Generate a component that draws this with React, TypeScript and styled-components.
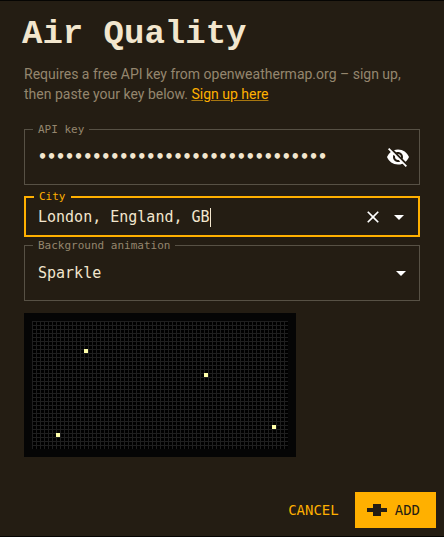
import React, { useEffect, useRef, useState } from "react";
import styled, { createGlobalStyle, css } from "styled-components";
import { MdArrowDropDown, MdClose, MdVisibility, MdVisibilityOff } from "react-icons/md";

const color = {
  backdrop: "#060503",
  surface: "#241d13",
  cream: "#f2e6ce",
  muted: "#94866e",
  outline: "#575145",
  accent: "#ffb000",
  ink: "#241d13",
};
const mono = '"DejaVu Sans Mono", "Liberation Mono", monospace';

const GlobalStyle = createGlobalStyle`
  * { box-sizing: border-box; }
  body { margin: 0; background: ${color.backdrop}; }
  button, input, select { font: inherit; color: inherit; }
`;

const Dialog = styled.form`
  margin: 1px 0;
  background: ${color.surface};
  color: ${color.cream};
  font-family: ${mono};
`;

const Title = styled.h2`
  margin: 0;
  padding: 17px 22px 14px;
  font: bold 34px/32px "Liberation Mono", monospace;
`;

const Content = styled.div`
  padding: 0 24px;
`;

const Intro = styled.p`
  margin: 0 0 20px;
  color: ${color.muted};
  font: 14px/20px Roboto, sans-serif;
`;

const SignUp = styled.a`
  color: ${color.accent};
  text-decoration-color: #a87710;
`;

const Field = styled.fieldset<{ $active?: boolean }>`
  min-width: 0;
  margin: 0;
  padding: 0;
  border: 1px solid ${color.outline};
  ${(p) => p.$active && css`
    margin: 6px 0 3px;
    border: 2px solid ${color.accent};
  `}
`;

const Legend = styled.legend<{ $active?: boolean }>`
  margin-left: 8px;
  padding: 0 5px;
  font-size: 11px;
  line-height: ${(p) => (p.$active ? 12 : 11)}px;
  color: ${(p) => (p.$active ? color.accent : color.muted)};
`;

const FieldRow = styled.div<{ $compact?: boolean }>`
  display: flex;
  align-items: center;
  height: ${(p) => (p.$compact ? 32 : 49)}px;
  padding: ${(p) => (p.$compact ? "0 7px 4px 12px" : "0 9px 5px 13px")};
  font-size: 15px;
`;

const TextInput = styled.input`
  flex: 1;
  width: 100%;
  min-width: 0;
  padding: 0;
  border: 0;
  outline: 0;
  background: transparent;
  line-height: 24px;
  &[type="password"] { font-weight: bold; }
`;

const CityEntry = styled.div`
  flex: 1;
  min-width: 0;
  display: grid;
  align-items: center;
  > * { grid-area: 1 / 1; }
  input { caret-color: transparent; }
  input:not(:focus) + span { visibility: hidden; }
`;

const Caret = styled.span`
  width: 1px;
  height: 19px;
  background: ${color.cream};
  pointer-events: none;
`;

const IconButton = styled.button`
  display: flex;
  align-items: center;
  justify-content: center;
  width: 24px;
  height: 24px;
  margin-left: 2px;
  padding: 0;
  border: 0;
  background: transparent;
  color: #fff;
  cursor: pointer;
`;

const SelectWrap = styled.div`
  flex: 1;
  display: grid;
  align-items: center;
  > * { grid-area: 1 / 1; }
  > svg {
    justify-self: end;
    margin-right: -3px;
    color: #fff;
    pointer-events: none;
  }
`;

const Select = styled.select`
  appearance: none;
  width: 100%;
  padding: 0;
  border: 0;
  outline: 0;
  background: transparent;
  line-height: 24px;
  option { background: ${color.surface}; }
`;

const Preview = styled.div`
  width: fit-content;
  max-width: 100%;
  margin-top: 12px;
  padding: 8px;
  background: #050505;
  svg { display: block; max-width: 100%; }
`;

const Actions = styled.div`
  display: flex;
  justify-content: flex-end;
  gap: 8px;
  padding: 35px 8px 8px;
`;

const Action = styled.button<{ $primary?: boolean }>`
  display: flex;
  align-items: center;
  gap: 8px;
  height: 36px;
  padding: 0 ${(p) => (p.$primary ? 16 : 8)}px 0 ${(p) => (p.$primary ? 12 : 8)}px;
  border: 0;
  background: ${(p) => (p.$primary ? color.accent : "transparent")};
  color: ${(p) => (p.$primary ? color.ink : color.accent)};
  font-size: 14px;
  cursor: pointer;
`;

const sparkles = [
  [13, 7],
  [43, 13],
  [60, 26],
  [6, 28],
];

function SparklePreview() {
  return (
    <svg width="256" height="128" viewBox="0 0 256 128" shapeRendering="crispEdges" aria-label="Sparkle preview">
      <defs>
        <pattern id="matrix" width="4" height="4" patternUnits="userSpaceOnUse">
          <rect width="4" height="4" fill="#000" />
          <path d="M0 0h4v1H0zM0 1h1v3H0z" fill="#1f1f1f" />
        </pattern>
      </defs>
      <rect width="256" height="128" fill="url(#matrix)" />
      {sparkles.map(([x, y]) => (
        <rect key={`${x}-${y}`} x={x * 4} y={y * 4} width="4" height="4" fill="#ffffaa" />
      ))}
    </svg>
  );
}

export default function App() {
  const cityRef = useRef<HTMLInputElement>(null);
  const [apiKey, setApiKey] = useState("0123456789abcdef0123456789abcdef");
  const [visible, setVisible] = useState(false);
  const [city, setCity] = useState("London, England, GB");
  const [caret, setCaret] = useState(city.length);

  useEffect(() => {
    const input = cityRef.current;
    input?.focus();
    input?.setSelectionRange(input.value.length, input.value.length);
  }, []);

  return (
    <>
      <GlobalStyle />
      <Dialog onSubmit={(e) => e.preventDefault()}>
        <Title>Air Quality</Title>
        <Content>
          <Intro>
            Requires a free API key from openweathermap.org – sign up, then paste your key below.{" "}
            <SignUp href="#signup">Sign up here</SignUp>
          </Intro>
          <Field>
            <Legend><label htmlFor="api-key">API key</label></Legend>
            <FieldRow>
              <TextInput
                id="api-key"
                type={visible ? "text" : "password"}
                value={apiKey}
                onChange={(e) => setApiKey(e.target.value)}
              />
              <IconButton type="button" aria-label="Toggle key visibility" onClick={() => setVisible(!visible)}>
                {visible ? <MdVisibility size={24} /> : <MdVisibilityOff size={24} />}
              </IconButton>
            </FieldRow>
          </Field>
          <Field $active>
            <Legend $active><label htmlFor="city">City</label></Legend>
            <FieldRow $compact>
              <CityEntry>
                <TextInput
                  id="city"
                  ref={cityRef}
                  value={city}
                  onChange={(e) => setCity(e.target.value)}
                  onSelect={(e) => setCaret(e.currentTarget.selectionEnd ?? 0)}
                />
                <Caret style={{ marginLeft: `${caret}ch` }} />
              </CityEntry>
              <IconButton
                type="button"
                aria-label="Clear"
                onClick={() => {
                  setCity("");
                  setCaret(0);
                }}
              >
                <MdClose size={20} />
              </IconButton>
              <IconButton type="button" aria-label="Open">
                <MdArrowDropDown size={24} />
              </IconButton>
            </FieldRow>
          </Field>
          <Field>
            <Legend><label htmlFor="animation">Background animation</label></Legend>
            <FieldRow>
              <SelectWrap>
                <Select id="animation" defaultValue="Sparkle">
                  <option>Sparkle</option>
                </Select>
                <MdArrowDropDown size={24} />
              </SelectWrap>
            </FieldRow>
          </Field>
          <Preview><SparklePreview /></Preview>
        </Content>
        <Actions>
          <Action type="button">CANCEL</Action>
          <Action type="submit" $primary>
            <svg width="20" height="12" viewBox="0 0 20 12" fill="currentColor" shapeRendering="crispEdges" aria-hidden="true">
              <path d="M6 0h8v4h6v4h-6v4H6V8H0V4h6z" />
            </svg>
            ADD
          </Action>
        </Actions>
      </Dialog>
    </>
  );
}
